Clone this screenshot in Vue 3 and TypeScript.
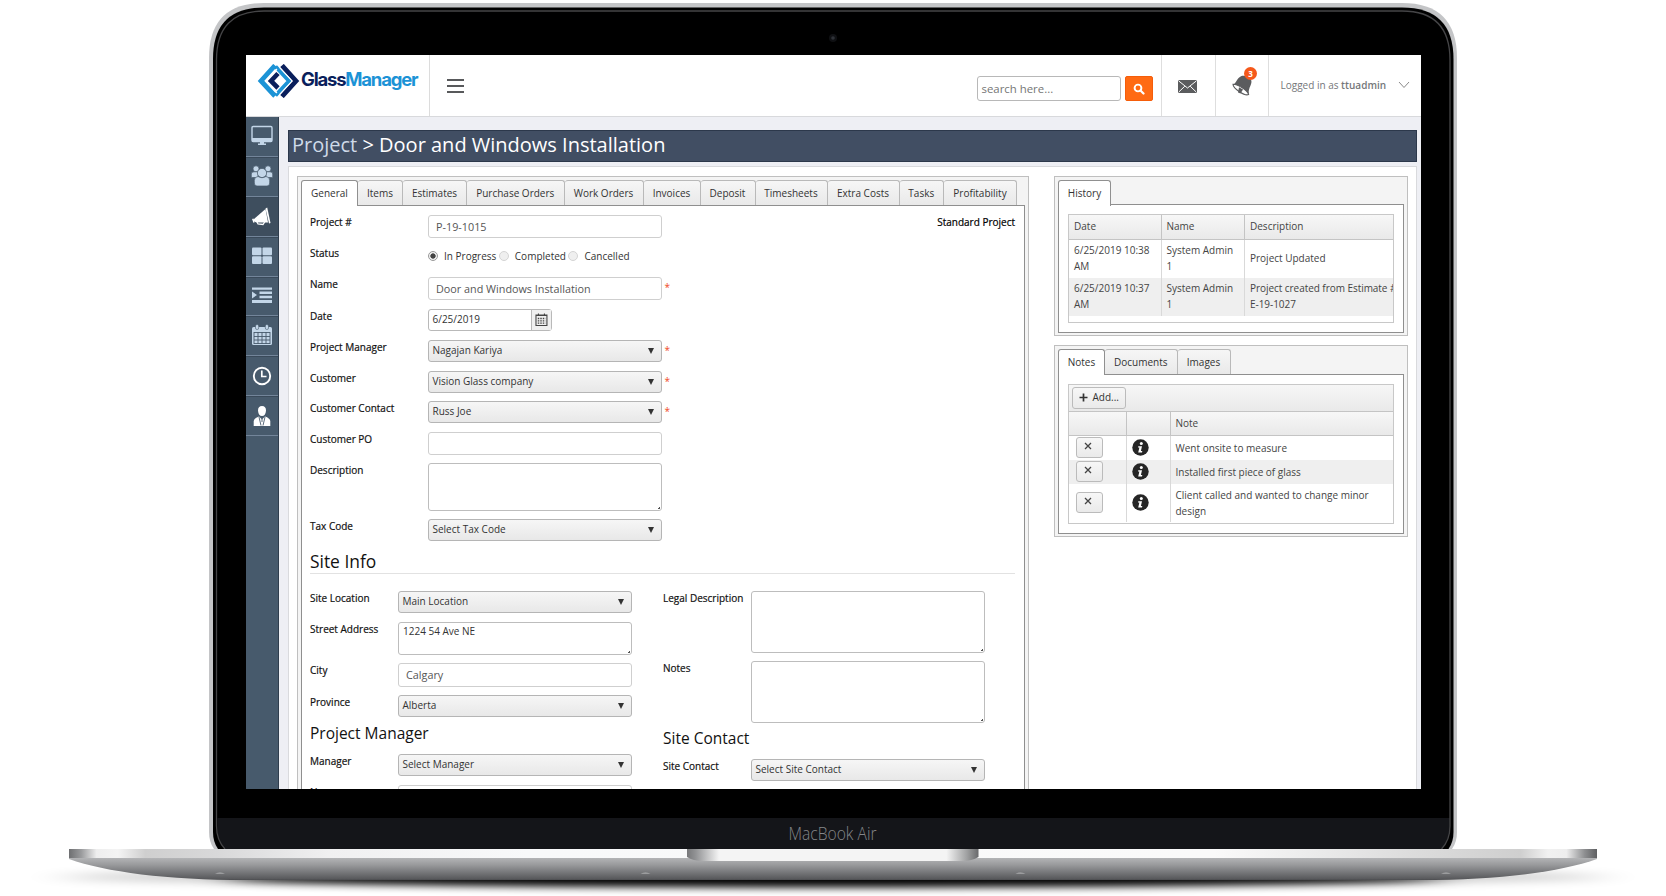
<script setup lang="ts">
interface Row {
  label: string
  kind: 'text' | 'select' | 'area' | 'date' | 'radio'
  value?: string
  step: number
  height: number
  required?: boolean
}

const tabs = [
  { name: 'General', width: 57 },
  { name: 'Items', width: 45 },
  { name: 'Estimates', width: 64 },
  { name: 'Purchase Orders', width: 97.5 },
  { name: 'Work Orders', width: 79 },
  { name: 'Invoices', width: 57 },
  { name: 'Deposit', width: 55 },
  { name: 'Timesheets', width: 72 },
  { name: 'Extra Costs', width: 72 },
  { name: 'Tasks', width: 44.5 },
  { name: 'Profitability', width: 73 },
]

const mainRows: Row[] = [
  { label: 'Project #', kind: 'text', value: 'P-19-1015', step: 31, height: 23 },
  { label: 'Status', kind: 'radio', step: 31, height: 18 },
  { label: 'Name', kind: 'text', value: 'Door and Windows Installation', step: 32, height: 23, required: true },
  { label: 'Date', kind: 'date', value: '6/25/2019', step: 30.5, height: 22 },
  { label: 'Project Manager', kind: 'select', value: 'Nagajan Kariya', step: 31, height: 22, required: true },
  { label: 'Customer', kind: 'select', value: 'Vision Glass company', step: 30.5, height: 22, required: true },
  { label: 'Customer Contact', kind: 'select', value: 'Russ Joe', step: 31, height: 22, required: true },
  { label: 'Customer PO', kind: 'text', value: '', step: 31, height: 23 },
  { label: 'Description', kind: 'area', value: '', step: 56, height: 48 },
  { label: 'Tax Code', kind: 'select', value: 'Select Tax Code', step: 31, height: 22 },
]

const siteRows: Row[] = [
  { label: 'Site Location', kind: 'select', value: 'Main Location', step: 31, height: 22 },
  { label: 'Street Address', kind: 'area', value: '1224 54 Ave NE', step: 41, height: 33 },
  { label: 'City', kind: 'text', value: 'Calgary', step: 32, height: 24 },
  { label: 'Province', kind: 'select', value: 'Alberta', step: 29, height: 22 },
]

const managerRows: Row[] = [
  { label: 'Manager', kind: 'select', value: 'Select Manager', step: 31, height: 22 },
  { label: 'Name', kind: 'text', value: '', step: 31, height: 23 },
]

const legalRows: Row[] = [
  { label: 'Legal Description', kind: 'area', value: '', step: 70, height: 62 },
  { label: 'Notes', kind: 'area', value: '', step: 66, height: 62 },
]

const contactRows: Row[] = [
  { label: 'Site Contact', kind: 'select', value: 'Select Site Contact', step: 31, height: 22 },
]

const groups = {
  left: [
    { title: '', rows: siteRows },
    { title: 'Project Manager', rows: managerRows },
  ],
  right: [
    { title: '', rows: legalRows },
    { title: 'Site Contact', rows: contactRows },
  ],
}

const notes = ['Went onsite to measure', 'Installed first piece of glass', 'Client called and wanted to change minor design']
const feet = [220, 645.5, 1020.5, 1446]
const nav = ['monitor', 'users', 'megaphone', 'grid', 'indent', 'calendar', 'clock', 'person']
</script>

<template>
  <div class="stage">
    <svg class="laptop" width="1666" height="896" viewBox="0 0 1666 896">
      <defs>
        <linearGradient id="lip" x1="69" x2="1597" y1="0" y2="0" gradientUnits="userSpaceOnUse">
          <stop offset="0" stop-color="#6e6f71" />
          <stop offset=".008" stop-color="#9a9b9d" />
          <stop offset=".018" stop-color="#eeeeee" />
          <stop offset=".032" stop-color="#f4f4f4" />
          <stop offset=".05" stop-color="#cfcfcf" />
          <stop offset=".1" stop-color="#d9d9da" />
          <stop offset=".17" stop-color="#f0f0f1" />
          <stop offset=".3" stop-color="#f8f9fa" />
          <stop offset=".75" stop-color="#fafafa" />
          <stop offset=".88" stop-color="#dcdcdc" />
          <stop offset=".95" stop-color="#cfcfcf" />
          <stop offset=".968" stop-color="#f1f1f1" />
          <stop offset=".98" stop-color="#eeeeee" />
          <stop offset=".992" stop-color="#8d8e90" />
          <stop offset="1" stop-color="#5f6062" />
        </linearGradient>
        <linearGradient id="belly" x1="0" x2="0" y1="858" y2="880" gradientUnits="userSpaceOnUse">
          <stop offset="0" stop-color="#b3b4b6" />
          <stop offset=".3" stop-color="#9a9b9d" />
          <stop offset=".95" stop-color="#58595c" />
          <stop offset="1" stop-color="#4a4b4e" />
        </linearGradient>
        <linearGradient id="notch" x1="687" x2="978.5" y1="0" y2="0" gradientUnits="userSpaceOnUse">
          <stop offset="0" stop-color="#77787a" />
          <stop offset=".03" stop-color="#929395" />
          <stop offset=".11" stop-color="#f4f4f4" />
          <stop offset=".89" stop-color="#f4f4f4" />
          <stop offset=".96" stop-color="#a0a1a2" />
          <stop offset="1" stop-color="#68696b" />
        </linearGradient>
        <filter id="soft" x="-10%" y="-150%" width="120%" height="400%">
          <feGaussianBlur stdDeviation="18 4" />
        </filter>
        <filter id="softer" x="-10%" y="-150%" width="120%" height="400%">
          <feGaussianBlur stdDeviation="22 5" />
        </filter>
      </defs>
      <ellipse cx="833" cy="877" rx="775" ry="8" fill="#000" opacity=".22" filter="url(#softer)" />
      <ellipse cx="833" cy="878" rx="610" ry="9" fill="#000" filter="url(#soft)" />
      <path d="M214 849Q209 842 209 832V58Q209 3 264 3H1402Q1457 3 1457 58V832Q1457 842 1452 849Z" fill="#c4c5c7" />
      <path d="M213 832V59Q213 7.500 264 7.500H1402Q1453.500 7.500 1453.500 59V832Q1453.500 842 1448.500 849H218Q213 842 213 832Z" fill="#000" />
      <path d="M217.500 818H1450V826Q1450 840 1441 849H225Q217.500 842 217.500 828Z" fill="#141519" />
      <path d="M225 849Q216.500 840 216.500 826V60Q216.500 11 264 11H1402Q1450 11 1450 60V826Q1450 840 1441.500 849" fill="none" stroke="#454547" stroke-width="1.300" />
      <circle cx="833" cy="38" r="4" fill="#0f1013" />
      <circle cx="833" cy="38" r="1.800" fill="#2f3238" />
      <text class="brand" x="788.500" y="839.500" textLength="88" lengthAdjust="spacingAndGlyphs">MacBook Air</text>
      <path d="M69 857H1597V859C1560 872 1500 880 1420 880H246C166 880 106 872 69 859Z" fill="url(#belly)" />
      <rect x="69" y="849" width="1528" height="9" fill="url(#lip)" />
      <path d="M687 849H978.500V857Q972 861 962 861H703Q693 861 687 857Z" fill="url(#notch)" />
      <path v-for="x in feet" :key="x" :d="`M${x - 5} 874Q${x} 870.500 ${x + 5} 874Z`" fill="#9b9c9e" />
    </svg>

    <main class="screen">
      <header class="top">
        <div class="logo">
          <svg width="164" height="34" viewBox="0 0 164 34">
            <g fill="none" stroke-width="4.800">
              <path d="M18 1.500L4 17L18 32" stroke="#1c93d6" />
              <path d="M25 1.500L39 17L25 32.500" stroke="#0a1f5c" />
              <path d="M18.500 2.500L32 17L18.500 31.500" stroke="#1c93d6" stroke-width="4" />
              <path d="M21 9.500L14 17L21 24" stroke="#0a1f5c" stroke-width="4.600" />
            </g>
            <path d="M8.700 17L20 5M8.700 17L20 29" stroke="#fff" stroke-width="1.200" />
            <path d="M22.500 3.500L35 17L22.500 30.500" stroke="#fff" stroke-width="1.100" fill="none" />
            <text class="word" x="44" y="22" textLength="117.500" lengthAdjust="spacing"><tspan fill="#0a1f5c">Glass</tspan><tspan fill="#1c93d6">Manager</tspan></text>
          </svg>
        </div>
        <div class="burger"><i /><i /><i /></div>
        <div class="search">
          <span class="query">search here...</span>
          <span class="go">
            <svg width="12" height="12" viewBox="0 0 12 12"><circle cx="5" cy="5" r="3.400" fill="none" stroke="#fff" stroke-width="1.900" /><path d="M7.500 7.500L10.500 10.500" stroke="#fff" stroke-width="2.200" stroke-linecap="round" /></svg>
          </span>
        </div>
        <div class="cell">
          <svg width="19" height="13" viewBox="0 0 19 13"><rect width="19" height="13" rx="1.500" fill="#5b5c5e" /><path d="M1 1.200L9.500 8L18 1.200M1 11.800L6.800 6.200M18 11.800L12.200 6.200" fill="none" stroke="#fff" stroke-width="1" /></svg>
        </div>
        <div class="cell bell">
          <svg width="22" height="22" viewBox="0 0 22 22">
            <path d="M2 9.500C5.500 8.500 5.500 3.500 10 1.300C13 0 18 1.500 20 4.500C22 9 17 12.500 17.800 18.500L15 19.500C10 18.500 4 14 2 9.500Z" fill="#5b5c5e" />
            <path d="M2 9.200C6 9 16.500 15 17.600 19.500C14 21.500 2 13.500 2 9.200Z" fill="#fff" stroke="#5b5c5e" stroke-width="1.100" />
            <path d="M8 12.200L7 17.500L9.500 18.500L12 14.500Z" fill="#5b5c5e" />
          </svg>
          <b class="badge">3</b>
        </div>
        <div class="user">
          <span>Logged in as <b>ttuadmin</b></span>
          <svg width="12" height="8" viewBox="0 0 12 8"><path d="M1 1L6 6.500L11 1" fill="none" stroke="#8a8a8a" stroke-width="1" /></svg>
        </div>
      </header>

      <div class="body">
        <nav class="side">
          <div v-for="n in nav" :key="n" class="item" :class="[n, { active: n === 'megaphone' }]">
            <svg width="22" height="22" viewBox="0 0 22 22">
              <template v-if="n === 'monitor'">
                <rect x="1" y="1.500" width="20" height="15" rx="1.200" fill="none" stroke="#c3d6e8" stroke-width="1.400" />
                <path d="M1 13H21V17H1ZM9 17H13V18.500H15V20H7V18.500H9Z" fill="#c3d6e8" />
              </template>
              <g v-else-if="n === 'users'" fill="#c3d6e8" stroke="#475a6c" stroke-width=".7">
                <circle cx="5" cy="3.800" r="3" /><circle cx="17" cy="3.800" r="3" />
                <path d="M.3 12V9Q.3 6.800 3 6.800H7V12.500H1.500Q.3 12.500 .3 12ZM21.700 12V9Q21.700 6.800 19 6.800H15V12.500H20.500Q21.700 12.500 21.700 12Z" />
                <circle cx="11" cy="8" r="4.600" />
                <path d="M3.300 18V15.500Q3.300 11.700 7 11.500Q11 14 15 11.500Q18.700 11.700 18.700 15.500V18Q18.700 21 16 21H6Q3.300 21 3.300 18Z" />
              </g>
              <g v-else-if="n === 'megaphone'" fill="#fff">
                <path d="M16.200 2.500L19.500 18L18 18.400L14.500 3.500Z" />
                <path d="M14.500 4L17 17.500L6 17.500Q2.500 17 2.500 14.500Z" />
                <path d="M5.500 16L7 19L12 19.500L14 16.500" fill="none" stroke="#fff" stroke-width="1.300" />
                <path d="M1.800 13.800L3 17.500" stroke="#fff" stroke-width="1.500" />
              </g>
              <g v-else-if="n === 'grid'" fill="#c3d6e8">
                <rect x="1" y="2.500" width="9.500" height="7.700" rx="1" /><rect x="11.500" y="2.500" width="9.500" height="7.700" rx="1" />
                <rect x="1" y="11.200" width="9.500" height="7.700" rx="1" /><rect x="11.500" y="11.200" width="9.500" height="7.700" rx="1" />
              </g>
              <path v-else-if="n === 'indent'" fill="#c3d6e8" d="M1 2.500H21V4.800H1ZM8.500 6.500H21V9H8.500ZM8.500 10.700H21V13.200H8.500ZM1 15H21V18H1ZM1 6.500L6 10L1 13.500Z" />
              <g v-else-if="n === 'calendar'">
                <rect x="1" y="3" width="20" height="18" rx="1.500" fill="#c3d6e8" />
                <rect x="4.500" y=".5" width="3.200" height="5" rx="1.500" fill="#c3d6e8" stroke="#475a6c" stroke-width=".6" />
                <rect x="14.300" y=".5" width="3.200" height="5" rx="1.500" fill="#c3d6e8" stroke="#475a6c" stroke-width=".6" />
                <path d="M3 8.500H19M3 12.500H19M3 16H19M3 19.500H19M3 8V20M7 8V20M11 8V20M15 8V20M19 8V20" stroke="#475a6c" stroke-width=".9" />
              </g>
              <g v-else-if="n === 'clock'" fill="none" stroke="#fff">
                <circle cx="11" cy="11" r="8.200" stroke-width="1.900" /><path d="M10.800 5.500V11.500H15.500" stroke-width="1.700" />
              </g>
              <g v-else fill="#fff">
                <path d="M11 1Q15 1 15 5.500Q14.500 11 11 11Q7.500 11 7 5.500Q7 1 11 1Z" />
                <path d="M2.700 21V16Q3.300 13 8 11.500L11 14.500L14 11.500Q18.700 13 19.300 16V21Z" />
                <path d="M8 12L10 20.500M14 12L12 20.500M11 14V17" stroke="#475a6c" stroke-width=".9" />
              </g>
            </svg>
          </div>
        </nav>

        <section class="content">
          <h1><em>Project</em> &gt; Door and Windows Installation</h1>
          <div class="sheet">
            <div class="box project">
              <div class="tabs">
                <span v-for="(t, i) in tabs" :key="t.name" class="tab" :class="{ on: i === 0 }" :style="{ width: t.width + 'px' }">{{ t.name }}</span>
              </div>
              <div class="pane form">
                <div class="head">
                  <div class="fields">
                    <div v-for="r in mainRows" :key="r.label" class="row" :style="{ height: r.step + 'px' }">
                      <label>{{ r.label }}</label>
                      <div v-if="r.kind === 'radio'" class="radios">
                        <i class="dot checked" /><span class="r1">In Progress</span>
                        <i class="dot" /><span class="r2">Completed</span>
                        <i class="dot" /><span>Cancelled</span>
                      </div>
                      <div v-else-if="r.kind === 'date'" class="date">
                        <span>{{ r.value }}</span>
                        <svg width="19" height="20" viewBox="0 0 19 20"><path d="M4 5H15V15.500H4ZM6.500 3.500V6M12.500 3.500V6M4 5.500H15" fill="none" stroke="#444" stroke-width="1.100" /><path d="M5.800 8.500H13.500M5.800 10.800H13.500M5.800 13.200H13.500" stroke="#444" stroke-width="1.300" stroke-dasharray="1.500 1" /></svg>
                      </div>
                      <div v-else class="ctl" :class="r.kind" :style="{ height: r.height + 'px' }">{{ r.value }}</div>
                      <span v-if="r.required" class="star">*</span>
                    </div>
                  </div>
                  <strong>Standard Project</strong>
                </div>
                <h2>Site Info</h2>
                <div class="site">
                  <div v-for="(g, side) in groups" :key="side" class="col" :class="side">
                    <template v-for="part in g" :key="part.title">
                      <h3 v-if="part.title">{{ part.title }}</h3>
                      <div v-for="r in part.rows" :key="r.label" class="row" :style="{ height: r.step + 'px' }">
                        <label>{{ r.label }}</label>
                        <div class="ctl" :class="r.kind" :style="{ height: r.height + 'px' }">{{ r.value }}</div>
                      </div>
                    </template>
                  </div>
                </div>
              </div>
            </div>

            <aside>
              <div class="box history">
                <div class="tabs"><span class="tab on">History</span></div>
                <div class="pane">
                  <div class="table">
                    <div class="tr th"><span>Date</span><span>Name</span><span>Description</span></div>
                    <div class="tr"><span>6/25/2019 10:38<br />AM</span><span>System Admin<br />1</span><span>Project Updated</span></div>
                    <div class="tr alt"><span>6/25/2019 10:37<br />AM</span><span>System Admin<br />1</span><span class="clip">Project created from Estimate&nbsp;#<br />E-19-1027</span></div>
                  </div>
                </div>
              </div>
              <div class="box notes">
                <div class="tabs"><span class="tab on">Notes</span><span class="tab docs">Documents</span><span class="tab imgs">Images</span></div>
                <div class="pane">
                  <div class="table">
                    <div class="bar"><button><svg width="9" height="9" viewBox="0 0 9 9"><path d="M4.500 .5V8.500M.5 4.500H8.500" stroke="#333" stroke-width="1.700" /></svg>Add...</button></div>
                    <div class="tr th"><span /><span /><span>Note</span></div>
                    <div v-for="(n, i) in notes" :key="n" class="tr" :class="{ alt: i === 1, tall: i === 2 }">
                      <span><button class="del"><svg width="8" height="8" viewBox="0 0 8 8"><path d="M1 1L7 7M7 1L1 7" stroke="#444" stroke-width="1.300" /></svg></button></span>
                      <span><svg class="info" width="17" height="17" viewBox="0 0 17 17"><circle cx="8.500" cy="8.500" r="8.200" fill="#262626" /><circle cx="9.300" cy="4.500" r="1.500" fill="#fff" /><path d="M6.300 7.200H10L8.900 12H10.300L10 13.400H6.200L7.400 8.500H6Z" fill="#fff" /></svg></span>
                      <span>{{ n }}</span>
                    </div>
                  </div>
                </div>
              </div>
            </aside>
          </div>
        </section>
      </div>
    </main>
  </div>
</template>

<style>
html,
body {
  margin: 0;
  background: #fff;
  overflow: hidden;
}
</style>

<style scoped>
* {
  box-sizing: border-box;
}
.stage {
  position: relative;
  width: 1666px;
  height: 896px;
  padding: 55px 245px 0 246px;
  font: 10px/16px 'Open Sans', sans-serif;
  color: #333;
  overflow: hidden;
}
.laptop {
  position: absolute;
  inset: 0;
}
.brand {
  font: 300 17.500px 'Open Sans', sans-serif;
  fill: #85878a;
}
.screen {
  position: relative;
  width: 1175px;
  height: 734px;
  overflow: hidden;
  background: #eeeff4;
}
.top {
  display: flex;
  height: 62px;
  background: #fff;
  border-bottom: 1px solid #d8d9dc;
}
.logo {
  width: 184px;
  padding: 9px 0 0 10.500px;
  border-right: 1px solid #dcdcdc;
}
.word {
  font: 700 18.500px Inter, sans-serif;
}
.burger {
  width: 17px;
  margin: 24px auto 0 17px;
}
.burger i {
  display: block;
  height: 2px;
  margin-bottom: 4px;
  background: #58595b;
}
.search {
  display: flex;
  gap: 4px;
  padding: 21px 8px 0 0;
}
.query {
  width: 144px;
  height: 25px;
  border: 1px solid #b8b8b8;
  border-radius: 3px;
  padding-left: 3.500px;
  font-size: 11.400px;
  line-height: 23px;
  color: #757575;
}
.go {
  width: 28px;
  height: 25px;
  display: grid;
  place-items: center;
  border-radius: 2px;
  border: 1px solid #f55d0a;
  background: #ff6a13;
}
.cell {
  width: 53.500px;
  border-left: 1px solid #dedede;
  padding: 25px 0 0 16px;
}
.bell {
  position: relative;
  padding: 20px 0 0 15px;
}
.badge {
  position: absolute;
  left: 28.500px;
  top: 11.500px;
  width: 13px;
  height: 13px;
  border-radius: 50%;
  background: #f5581a;
  color: #fff;
  font-size: 8px;
  line-height: 13px;
  text-align: center;
}
.user {
  display: flex;
  width: 153px;
  justify-content: space-between;
  align-items: center;
  padding: 0 11.500px 1px 11.500px;
  border-left: 1px solid #dedede;
  color: #75777a;
  font-size: 10px;
}
.user b {
  font-weight: 600;
}
.body {
  display: flex;
  height: 672px;
}
.side {
  width: 33px;
  background: #475a6c;
  border-right: 1px solid #2f3d4d;
}
.item {
  height: 39.900px;
  padding: 8px 0 0 5px;
  border-bottom: 1px solid #73859a;
}
.item:nth-child(n + 2) {
  box-shadow: inset 0 1px #3a4a5a;
}
.item.clock,
.item.person {
  padding-top: 9px;
}
.item.active {
  background: #3e4e5e;
}
.content {
  width: 1142px;
  padding: 13px 0 0 9px;
}
h1 {
  width: 1129px;
  height: 32px;
  margin: 0 0 4px;
  padding-left: 3px;
  border: 1px solid #2c384b;
  background: #414e63;
  color: #fff;
  font-size: 20px;
  font-weight: 400;
  line-height: 28px;
}
h1 em {
  font-style: normal;
  color: #cfdae8;
}
.sheet {
  display: flex;
  align-items: flex-start;
  width: 1129px;
  height: 640px;
  padding: 9px 0 0 8px;
  border: 1px solid #d9dadd;
  background: #fff;
}
.box {
  padding: 3px;
  border: 1px solid #bfbfbf;
  background: #f4f4f4;
}
.project {
  width: 732px;
  height: 640px;
}
.tabs {
  display: flex;
  height: 25px;
}
.tab {
  height: 25px;
  flex: none;
  border: 1px solid #b9b9b9;
  border-left-width: 0;
  border-bottom: 0;
  border-radius: 3px 3px 0 0;
  background: linear-gradient(#f6f6f6, #e9e9e9);
  line-height: 24px;
  text-align: center;
}
.tab.on {
  position: relative;
  height: 26px;
  border: 1px solid #909090;
  border-bottom: 0;
  background: #fff;
}
.pane {
  border: 1px solid #8f8f8f;
  background: #fff;
}
.form {
  height: 620px;
  padding: 9px 9px 0 8px;
}
.head {
  display: flex;
  justify-content: space-between;
  height: 334px;
}
strong {
  margin-top: -1px;
  font-weight: 400;
  color: #000;
  -webkit-text-stroke: 0.2px #000;
}
.row {
  display: flex;
  align-items: flex-start;
}
label {
  width: 118px;
  flex: none;
  margin-top: -1px;
  color: #111;
  white-space: nowrap;
  -webkit-text-stroke: 0.2px #111;
}
.ctl {
  position: relative;
  width: 234px;
  border: 1px solid #bdbdbd;
  border-radius: 3px;
  background: #fff;
  color: #333;
}
.text {
  padding-left: 7px;
  border-color: #cfcfcf;
  font-size: 10.800px;
  line-height: 21px;
  color: #555;
}
.select {
  padding-left: 3.500px;
  border-color: #b5b5b5;
  background: linear-gradient(#f6f6f6, #e8e8e8);
  line-height: 19px;
}
.select::after {
  content: '';
  position: absolute;
  right: 7px;
  top: 7px;
  border: 3px solid transparent;
  border-top: 6px solid #333;
  border-bottom: 0;
}
.area {
  padding: 0 4px;
  line-height: 17px;
}
.area::after {
  content: '';
  position: absolute;
  right: 1px;
  bottom: 1px;
  width: 2px;
  height: 2px;
  background: linear-gradient(135deg, transparent 40%, #555 41%);
}
.star {
  margin-left: 2.500px;
  color: #f04a24;
  font-size: 10px;
  line-height: 20px;
}
.radios {
  display: flex;
  align-items: center;
  height: 19px;
  white-space: nowrap;
}
.dot {
  width: 10px;
  height: 10px;
  border: 1px solid #d4d4d4;
  border-radius: 50%;
  background: #efefef;
  margin-right: 6px;
}
.dot.checked {
  border-color: #999;
  background: radial-gradient(circle, #444 2.300px, #f2f2f2 3px);
}
.r1,
.r2 {
  margin-right: 2.500px;
}
.date {
  display: flex;
  width: 124px;
  height: 22px;
  border: 1px solid #b9b9b9;
  border-radius: 3px;
  background: #fff;
  line-height: 19px;
}
.date span {
  width: 103.500px;
  padding-left: 3.500px;
  border-right: 1px solid #b9b9b9;
}
.date svg {
  background: #f0f0f0;
}
h2 {
  margin: 0;
  height: 25px;
  border-bottom: 1px solid #e2e2e2;
  color: #111;
  font-size: 17.400px;
  font-weight: 400;
  line-height: 25px;
}
.site {
  display: flex;
  padding-top: 17px;
}
.left {
  width: 353px;
}
.left label {
  width: 88px;
}
.right label {
  width: 88px;
}
h3 {
  margin: 0;
  height: 30px;
  color: #111;
  font-size: 15.500px;
  font-weight: 400;
  line-height: 19px;
}
.right h3 {
  height: 32px;
  line-height: 23px;
}
aside {
  margin-left: 25px;
}
aside .box {
  width: 354px;
}
.history {
  height: 160px;
  margin-bottom: 8.500px;
}
.history .tab {
  width: 53px;
}
.notes {
  height: 192px;
}
.notes .tab {
  width: 47px;
}
.notes .docs {
  width: 72.500px;
}
.notes .imgs {
  width: 53px;
}
aside .pane {
  padding: 9px;
  border-width: 1px 1.500px 1.500px 1px;
}
.history .tabs {
  height: 24px;
}
.table {
  width: 326px;
  border: 1px solid #c8c8c8;
  color: #444;
  overflow: hidden;
}
.history .table {
  height: 109px;
}
.history .pane {
  height: 129px;
}
.notes .pane {
  height: 160px;
}
.notes .table {
  height: 140px;
}
.tr {
  display: grid;
  grid-template-columns: 91.500px 83.500px 1fr;
  height: 38px;
}
.tr > span {
  display: flex;
  align-items: center;
  min-width: 0;
  padding: 0 0 1px 5px;
  border-left: 1px solid #d9d9d9;
  white-space: nowrap;
}
.tr > span:first-child {
  border-left: 0;
}
.history .tr:not(.th) > span {
  padding-bottom: 2px;
}
.history .clip {
  letter-spacing: -0.05px;
}
.th {
  height: 24.500px;
  border-bottom: 1px solid #c4c4c4;
  background: linear-gradient(#f7f7f7, #e9e9e9);
}
.th > span {
  border-left-color: #c4c4c4;
}
.alt {
  background: #efefef;
}
.notes .tr {
  grid-template-columns: 56.500px 44px 1fr;
  height: 24px;
}
.notes .tr > span {
  padding-bottom: 0;
}
.notes .tr > span:first-child {
  padding-left: 6px;
}
.notes .tr > span:last-child {
  white-space: normal;
}
.notes .tall {
  height: 38.500px;
}
.bar {
  height: 27px;
  padding: 2px 3px;
  border-bottom: 1px solid #c4c4c4;
  background: linear-gradient(#f6f6f6, #e9e9e9);
}
button {
  display: flex;
  align-items: center;
  justify-content: center;
  gap: 4.500px;
  width: 54px;
  height: 22px;
  padding: 0 0 1px;
  border: 1px solid #bbb;
  border-radius: 3px;
  background: linear-gradient(#f7f7f7, #eaeaea);
  color: #333;
  font: inherit;
}
.del {
  width: 27px;
  height: 21px;
  margin-left: 1px;
  padding-right: 4px;
  padding-bottom: 3px;
}
</style>
